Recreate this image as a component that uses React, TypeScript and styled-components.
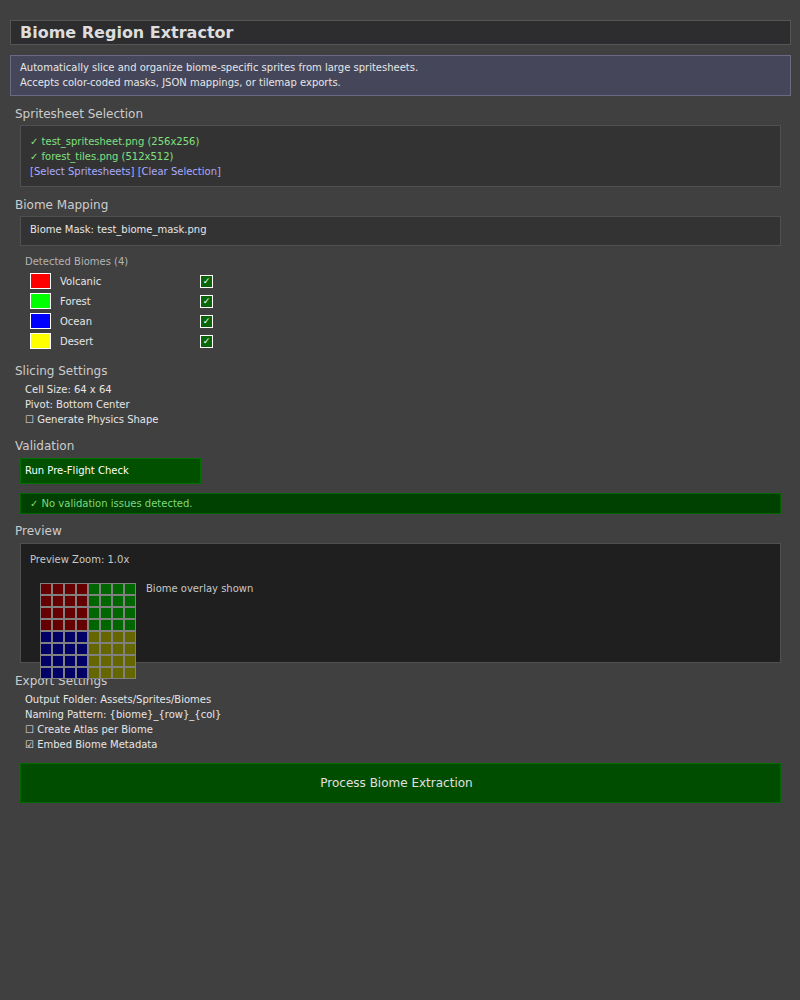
import React from 'react'
import styled, { createGlobalStyle } from 'styled-components'

const GlobalStyle = createGlobalStyle`
    html, body {
        margin: 0;
        padding: 0;
        background: #404040;
    }
    body {
        font-family: "DejaVu Sans", Verdana, sans-serif;
        color: #dddddd;
    }
`

type Biome = { name: string; color: string }

const biomes: Biome[] = [
    { name: 'Volcanic', color: '#ff0000' },
    { name: 'Forest', color: '#00ff00' },
    { name: 'Ocean', color: '#0000ff' },
    { name: 'Desert', color: '#ffff00' },
]

// 8x8 preview cells, quadrant colours
const cellColor = (row: number, col: number) => {
    if (row < 4) return col < 4 ? '#660000' : '#006600'
    return col < 4 ? '#000066' : '#666600'
}

const App: React.FC = () => {
    const cells = []
    for (let r = 0; r < 8; r++) {
        for (let c = 0; c < 8; c++) {
            cells.push(<Cell key={`${r}-${c}`} $color={cellColor(r, c)} />)
        }
    }

    return (
        <Page>
            <GlobalStyle />
            <TitleBar>Biome Region Extractor</TitleBar>
            <InfoBox>
                <Line>Automatically slice and organize biome-specific sprites from large spritesheets.</Line>
                <Line>Accepts color-coded masks, JSON mappings, or tilemap exports.</Line>
            </InfoBox>

            <Header>Spritesheet Selection</Header>
            <Panel $padTop={8} $padBottom={7}>
                <Line $color="#80e080">✓ test_spritesheet.png (256x256)</Line>
                <Line $color="#80e080">✓ forest_tiles.png (512x512)</Line>
                <Line $color="#aaaaff">[Select Spritesheets] [Clear Selection]</Line>
            </Panel>

            <Header>Biome Mapping</Header>
            <Panel $padTop={5} $padBottom={8}>
                <Line>Biome Mask: test_biome_mask.png</Line>
            </Panel>
            <BiomeList>
                <ListTitle>Detected Biomes (4)</ListTitle>
                {biomes.map(b => (
                    <BiomeRow key={b.name}>
                        <Swatch $color={b.color} />
                        <BiomeName>{b.name}</BiomeName>
                        <CheckBox>✓</CheckBox>
                    </BiomeRow>
                ))}
            </BiomeList>

            <Header>Slicing Settings</Header>
            <Lines>
                <Line>Cell Size: 64 x 64</Line>
                <Line>Pivot: Bottom Center</Line>
                <Line>☐ Generate Physics Shape</Line>
            </Lines>

            <Header $gap={9}>Validation</Header>
            <CheckButton>Run Pre-Flight Check</CheckButton>
            <ResultBox>✓ No validation issues detected.</ResultBox>

            <Header $gap={7}>Preview</Header>
            <PreviewPanel>
                <Line $color="#c8c8c8">Preview Zoom: 1.0x</Line>
                <PreviewRow>
                    <Grid>{cells}</Grid>
                    <Line $color="#c8c8c8">Biome overlay shown</Line>
                </PreviewRow>
            </PreviewPanel>

            <Header>Export Settings</Header>
            <Lines>
                <Line>Output Folder: Assets/Sprites/Biomes</Line>
                <Line>Naming Pattern: {'{biome}_{row}_{col}'}</Line>
                <Line>☐ Create Atlas per Biome</Line>
                <Line>☑ Embed Biome Metadata</Line>
            </Lines>

            <ProcessButton>Process Biome Extraction</ProcessButton>
        </Page>
    )
}

const Page = styled.div`
    width: 800px;
    min-height: 1000px;
    box-sizing: border-box;
    padding: 20px 9px 20px 10px;
    display: flex;
    flex-direction: column;
    background: #404040;
`
const TitleBar = styled.div`
    height: 25px;
    box-sizing: border-box;
    padding: 0 9px;
    background: #2d2d30;
    border: 1px solid #555555;
    color: #dddddd;
    font-size: 16px;
    font-weight: bold;
    line-height: 23px;
`
const InfoBox = styled.div`
    margin-top: 10px;
    height: 41px;
    box-sizing: border-box;
    padding: 4px 9px;
    background: #45465a;
    border: 1px solid #6a6a85;
`
const Line = styled.div<{ $color?: string }>`
    font-size: 10px;
    line-height: 15px;
    color: ${p => p.$color || '#e6e6e6'};
    white-space: pre;
`
const Header = styled.div<{ $gap?: number }>`
    margin: ${p => p.$gap ?? 8}px 0 0 5px;
    font-size: 12px;
    line-height: 20px;
    color: #cccccc;
`
const Panel = styled.div<{ $padTop: number; $padBottom: number }>`
    margin: 1px 10px 0;
    padding: ${p => p.$padTop}px 9px ${p => p.$padBottom}px;
    background: #333333;
    border: 1px solid #505050;
`
const BiomeList = styled.div`
    margin: 8px 0 2px 15px;
`
const ListTitle = styled.div`
    margin-bottom: 2px;
    font-size: 10px;
    line-height: 15px;
    color: #b4b4b4;
`
const BiomeRow = styled.div`
    height: 20px;
    display: flex;
    align-items: center;
    padding-left: 5px;
`
const Swatch = styled.div<{ $color: string }>`
    width: 21px;
    height: 16px;
    box-sizing: border-box;
    border: 1px solid #ffffff;
    background: ${p => p.$color};
`
const BiomeName = styled.span`
    width: 140px;
    margin-left: 9px;
    font-size: 10px;
    color: #e6e6e6;
`
const CheckBox = styled.span`
    width: 13px;
    height: 13px;
    box-sizing: border-box;
    border: 1px solid #ffffff;
    background: #0a640a;
    color: #ffffff;
    font-size: 9px;
    line-height: 11px;
    text-align: center;
`
const Lines = styled.div`
    margin: 1px 0 0 15px;
`
const CheckButton = styled.div`
    margin: 2px 0 0 10px;
    width: 181px;
    height: 26px;
    box-sizing: border-box;
    padding: 4px 4px;
    background: #005000;
    border: 1px solid #007000;
    color: #ffffff;
    font-size: 10px;
    line-height: 15px;
`
const ResultBox = styled.div`
    margin: 9px 10px 0;
    height: 21px;
    box-sizing: border-box;
    padding: 2px 9px;
    background: #004000;
    border: 1px solid #006400;
    color: #80d880;
    font-size: 10px;
    line-height: 15px;
`
const PreviewPanel = styled.div`
    margin: 2px 10px 0;
    height: 120px;
    box-sizing: border-box;
    padding: 8px 9px;
    background: #1f1f1f;
    border: 1px solid #505050;
`
const PreviewRow = styled.div`
    margin-top: 14px;
    display: flex;
    align-items: flex-start;
    gap: 10px;
    padding-left: 10px;
`
const Grid = styled.div`
    margin-top: 2px;
    display: grid;
    grid-template-columns: repeat(8, 12px);
    grid-auto-rows: 12px;
    position: relative;
    z-index: 1;
`
const Cell = styled.div<{ $color: string }>`
    box-sizing: border-box;
    border: 1px solid #808080;
    background: ${p => p.$color};
`
const ProcessButton = styled.div`
    margin: 11px 10px 0;
    height: 40px;
    box-sizing: border-box;
    padding-right: 8px;
    display: flex;
    align-items: center;
    justify-content: center;
    background: #004d00;
    border: 1px solid #006a00;
    color: #e0e0e0;
    font-size: 12px;
`

export default App
